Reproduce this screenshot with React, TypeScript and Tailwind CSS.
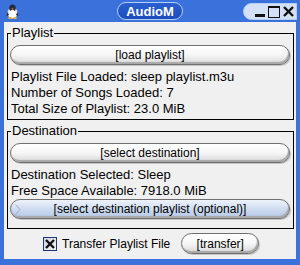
import React from "react";

const font = { fontFamily: '"Liberation Sans", Arial, sans-serif' };

function Pill({ children, blue = false, className = "" }: { children: React.ReactNode; blue?: boolean; className?: string }) {
  return (
    <div
      className={
        "flex items-center justify-center rounded-full border border-[#6f6f6f] text-[12px] text-black shadow-[inset_-1px_-2px_1px_#a8a8a8,1px_1px_0_#c4c4c4] " +
        (blue
          ? "bg-gradient-to-b from-[#eef3fb] via-[#cfdcf0] to-[#b3c7e6] "
          : "bg-gradient-to-b from-[#ffffff] via-[#f6f6f6] to-[#d8d8d8] ") +
        className
      }
    >
      {children}
    </div>
  );
}

function Group({ label, children, className = "" }: { label: string; children: React.ReactNode; className?: string }) {
  return (
    <div className={"relative border border-black " + className}>
      <div className="absolute left-[3px] top-[-9px] bg-[#f0f0f0] px-[1px] text-[13px] leading-[16px] text-black">{label}</div>
      {children}
    </div>
  );
}

export default function App() {
  return (
    <div className="w-[300px] h-[265px] bg-[#3a71da] flex flex-col overflow-hidden" style={font}>
      {/* title bar */}
      <div className="h-[22px] relative shrink-0">
        <svg className="absolute left-[6px] top-[4px]" width="13" height="15" viewBox="0 0 13 15">
          <ellipse cx="6.5" cy="9" rx="5" ry="5.5" fill="#e8ecf2" />
          <ellipse cx="6.5" cy="4" rx="3.3" ry="3.5" fill="#2a2a3a" />
          <ellipse cx="6.5" cy="10" rx="3.2" ry="4" fill="#ffffff" />
          <path d="M1.5 8 L0.5 12 L3 11 Z" fill="#2a2a3a" />
          <path d="M11.5 8 L12.5 12 L10 11 Z" fill="#2a2a3a" />
          <path d="M5.5 4.5 L7.5 4.5 L6.5 6 Z" fill="#f0b030" />
          <ellipse cx="4" cy="14" rx="2" ry="1" fill="#f0b030" />
          <ellipse cx="9" cy="14" rx="2" ry="1" fill="#f0b030" />
        </svg>
        <div className="absolute left-[117px] top-[2px] w-[66px] h-[18px] rounded-full border border-[#b4cff6] bg-gradient-to-b from-[#2b5fcf] to-[#1b4cbd] flex items-center justify-center">
          <span className="text-white font-bold text-[13px] leading-none">AudioM</span>
        </div>
        <div className="absolute left-[243px] top-[3px] w-[54px] h-[17px] rounded-l-full rounded-r-[3px] border border-[#b4cff6] bg-[#d3e0f5] flex items-center justify-end pr-[2px] gap-[2px]">
          <div className="w-[12px] h-[12px] flex items-end justify-center pb-[1px]">
            <div className="w-[10px] h-[3px] bg-[#111]" />
          </div>
          <div className="w-[12px] h-[12px] flex items-center justify-center">
            <div className="w-[12px] h-[12px] border border-[#111] border-t-[2px]" />
          </div>
          <div className="w-[12px] h-[12px] flex items-center justify-center">
            <svg width="11" height="11" viewBox="0 0 11 11">
              <path d="M1 1 L10 10 M10 1 L1 10" stroke="#111" strokeWidth="2.4" />
            </svg>
          </div>
        </div>
      </div>
      {/* body */}
      <div className="mx-[4px] mb-[6px] flex-1 bg-[#f0f0f0] flex flex-col pl-[3px] pr-[2px] pt-[11px] text-[13px] leading-[16px] text-black">
        <Group label="Playlist" className="h-[87px] pl-[2px] pr-[3px] pt-[11px]">
          <Pill className="h-[20px]">[load playlist]</Pill>
          <div className="pt-[4px] pl-[1px]">
            <div>Playlist File Loaded: sleep playlist.m3u</div>
            <div>Number of Songs Loaded: 7</div>
            <div>Total Size of Playlist: 23.0 MiB</div>
          </div>
        </Group>
        <Group label="Destination" className="mt-[11px] h-[98px] pl-[2px] pr-[3px] pt-[11px]">
          <Pill className="h-[20px]">[select destination]</Pill>
          <div className="pt-[4px] pl-[1px]">
            <div>Destination Selected: Sleep</div>
            <div>Free Space Available: 7918.0 MiB</div>
          </div>
          <Pill blue className="h-[20px] relative">
            <svg className="absolute left-[4px] top-[4px]" width="6" height="11" viewBox="0 0 6 11">
              <path d="M0.5 0.5 L5 5.5 L0.5 10.5" fill="none" stroke="#a0acbe" strokeWidth="1" />
            </svg>
            [select destination playlist (optional)]
          </Pill>
        </Group>
        <div className="flex items-center mt-[4px] pl-[36px]">
          <div className="w-[14px] h-[14px] border border-[#1c3a6e] bg-gradient-to-br from-[#d0d5de] to-[#f4f4f4] flex items-center justify-center">
            <svg width="10" height="10" viewBox="0 0 10 10">
              <path d="M1 1 L9 9 M9 1 L1 9" stroke="#111" strokeWidth="2.4" />
            </svg>
          </div>
          <span className="ml-[5px] text-[12px]">Transfer Playlist File</span>
          <Pill className="ml-[11px] w-[78px] h-[21px]">[transfer]</Pill>
        </div>
      </div>
    </div>
  );
}
